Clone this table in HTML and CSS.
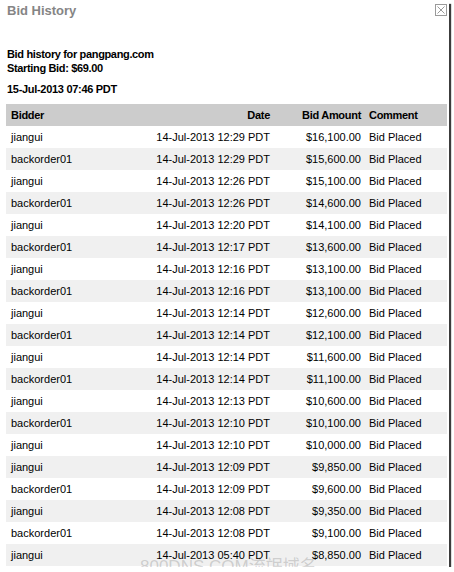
FILE: index.html
```html
<!DOCTYPE html>
<html>
<head>
<meta charset="utf-8">
<link rel="stylesheet" href="styles.css">
</head>
<body>
<div class="frame">
  <div class="titlebar">
    <span class="title">Bid History</span>
    <svg class="close" width="12" height="12" viewBox="0 0 12 12">
      <rect x="0.5" y="0.5" width="11" height="11" fill="#fff" stroke="#9a9a9a"/>
      <path d="M2.5 2.5 L9.5 9.5 M9.5 2.5 L2.5 9.5" stroke="#9a9a9a" stroke-width="1"/>
    </svg>
  </div>
  <div class="info">
    <div>Bid history for pangpang.com</div>
    <div>Starting Bid: $69.00</div>
  </div>
  <div class="now">15-Jul-2013 07:46 PDT</div>
  <table class="bids">
    <thead>
      <tr><th class="c1">Bidder</th><th class="c2">Date</th><th class="c3">Bid Amount</th><th class="c4">Comment</th></tr>
    </thead>
    <tbody>
      <tr><td>jiangui</td><td class="r">14-Jul-2013 12:29 PDT</td><td class="r">$16,100.00</td><td>Bid Placed</td></tr>
      <tr><td>backorder01</td><td class="r">14-Jul-2013 12:29 PDT</td><td class="r">$15,600.00</td><td>Bid Placed</td></tr>
      <tr><td>jiangui</td><td class="r">14-Jul-2013 12:26 PDT</td><td class="r">$15,100.00</td><td>Bid Placed</td></tr>
      <tr><td>backorder01</td><td class="r">14-Jul-2013 12:26 PDT</td><td class="r">$14,600.00</td><td>Bid Placed</td></tr>
      <tr><td>jiangui</td><td class="r">14-Jul-2013 12:20 PDT</td><td class="r">$14,100.00</td><td>Bid Placed</td></tr>
      <tr><td>backorder01</td><td class="r">14-Jul-2013 12:17 PDT</td><td class="r">$13,600.00</td><td>Bid Placed</td></tr>
      <tr><td>jiangui</td><td class="r">14-Jul-2013 12:16 PDT</td><td class="r">$13,100.00</td><td>Bid Placed</td></tr>
      <tr><td>backorder01</td><td class="r">14-Jul-2013 12:16 PDT</td><td class="r">$13,100.00</td><td>Bid Placed</td></tr>
      <tr><td>jiangui</td><td class="r">14-Jul-2013 12:14 PDT</td><td class="r">$12,600.00</td><td>Bid Placed</td></tr>
      <tr><td>backorder01</td><td class="r">14-Jul-2013 12:14 PDT</td><td class="r">$12,100.00</td><td>Bid Placed</td></tr>
      <tr><td>jiangui</td><td class="r">14-Jul-2013 12:14 PDT</td><td class="r">$11,600.00</td><td>Bid Placed</td></tr>
      <tr><td>backorder01</td><td class="r">14-Jul-2013 12:14 PDT</td><td class="r">$11,100.00</td><td>Bid Placed</td></tr>
      <tr><td>jiangui</td><td class="r">14-Jul-2013 12:13 PDT</td><td class="r">$10,600.00</td><td>Bid Placed</td></tr>
      <tr><td>backorder01</td><td class="r">14-Jul-2013 12:10 PDT</td><td class="r">$10,100.00</td><td>Bid Placed</td></tr>
      <tr><td>jiangui</td><td class="r">14-Jul-2013 12:10 PDT</td><td class="r">$10,000.00</td><td>Bid Placed</td></tr>
      <tr><td>jiangui</td><td class="r">14-Jul-2013 12:09 PDT</td><td class="r">$9,850.00</td><td>Bid Placed</td></tr>
      <tr><td>backorder01</td><td class="r">14-Jul-2013 12:09 PDT</td><td class="r">$9,600.00</td><td>Bid Placed</td></tr>
      <tr><td>jiangui</td><td class="r">14-Jul-2013 12:08 PDT</td><td class="r">$9,350.00</td><td>Bid Placed</td></tr>
      <tr><td>backorder01</td><td class="r">14-Jul-2013 12:08 PDT</td><td class="r">$9,100.00</td><td>Bid Placed</td></tr>
      <tr><td>jiangui</td><td class="r">14-Jul-2013 05:40 PDT</td><td class="r">$8,850.00</td><td>Bid Placed</td></tr>
    </tbody>
  </table>
  <div class="watermark">800DNS.COM流氓域名</div>
</div>
</body>
</html>
```

FILE: styles.css
```css
html, body {
  margin: 0;
  padding: 0;
  background: #fff;
}
body {
  font-family: "Liberation Sans", Arial, "Noto Sans CJK SC", sans-serif;
  font-size: 11px;
  color: #000;
}
.frame {
  position: relative;
  width: 449px;
  height: 567px;
  overflow: hidden;
  background: #fff;
  box-shadow: 3px 3px 1px -1px #3c3c3c;
}
.titlebar {
  display: flex;
  justify-content: space-between;
  align-items: flex-start;
  padding: 2px 7px 0 7px;
  height: 40px;
  box-sizing: border-box;
}
.title {
  font-size: 13px;
  font-weight: bold;
  color: #858585;
  line-height: 18px;
}
.close {
  margin-top: 2px;
  margin-right: -5px;
}
.info {
  padding: 7px 7px 0 7px;
  font-weight: bold;
  line-height: 14px;
  letter-spacing: -0.35px;
}
.now {
  padding: 7px 7px 0 7px;
  font-weight: bold;
  line-height: 14px;
  letter-spacing: -0.3px;
}
.bids {
  margin: 8px 0 0 6px;
  width: 441px;
  border-collapse: collapse;
  table-layout: fixed;
}
.bids th {
  background: #cccccc;
  font-weight: bold;
  height: 22px;
  padding: 0 5px;
  text-align: left;
  letter-spacing: -0.3px;
}
.bids td {
  height: 22px;
  padding: 0 5px;
  white-space: nowrap;
}
.bids tbody tr:nth-child(even) td {
  background: #f0f0f0;
}
.bids .c1 { width: 134px; }
.bids .c2 { width: 115px; text-align: right; }
.bids .c3 { width: 81px; text-align: right; padding-right: 3px; }
.bids .c4 { width: 73px; }
.bids td.r { text-align: right; }
.bids td:nth-child(3) { padding-right: 3px; }
.watermark {
  position: absolute;
  left: 140px;
  top: 552px;
  font-size: 17px;
  color: rgba(120, 120, 120, 0.3);
  white-space: nowrap;
}
```
